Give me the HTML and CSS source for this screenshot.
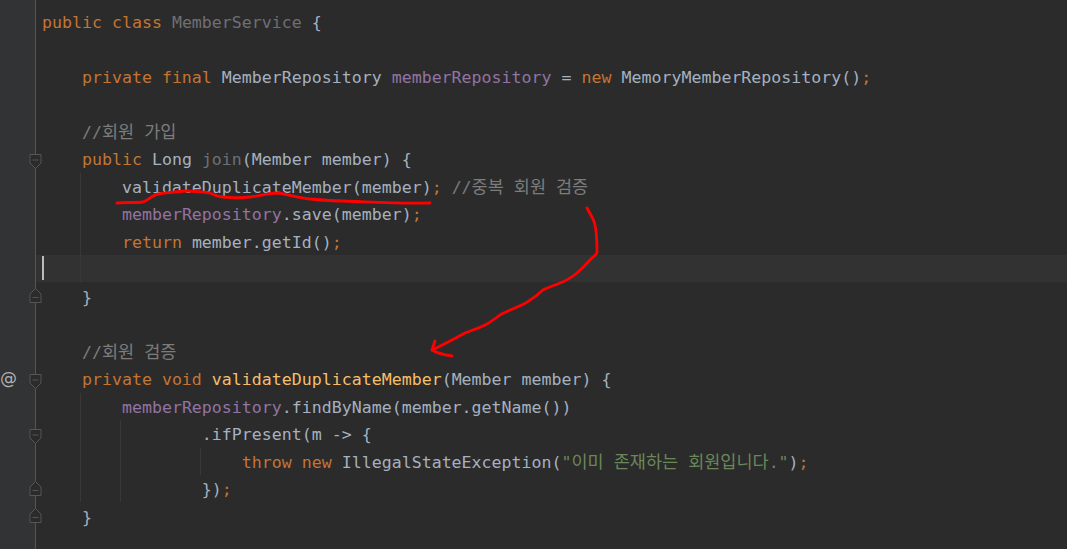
FILE: index.html
```html
<!DOCTYPE html>
<html lang="ko">
<head>
<meta charset="utf-8">
<title>MemberService</title>
<link rel="stylesheet" href="styles.css">
</head>
<body>
<main class="editor">
  <div class="line"><div class="gutter"></div><pre class="code"><span class="kw">public class</span> <span class="un">MemberService</span> {</pre></div>
  <div class="line"><div class="gutter"></div><pre class="code"></pre></div>
  <div class="line"><div class="gutter"></div><pre class="code">    <span class="kw">private final</span> MemberRepository <span class="fd">memberRepository</span> = <span class="kw">new</span> MemoryMemberRepository()<span class="kw">;</span></pre></div>
  <div class="line"><div class="gutter"></div><pre class="code"></pre></div>
  <div class="line"><div class="gutter"></div><pre class="code">    <span class="cm">//<span class="ko">회원</span> <span class="ko">가입</span></span></pre></div>
  <div class="line"><div class="gutter"><svg class="fold open" viewBox="0 0 13 16"><path d="M1 .5H12V9L6.500 14.500 1 9Z"/><path d="M3.500 6H9.500"/></svg></div><pre class="code">    <span class="kw">public</span> Long <span class="un">join</span>(Member member) {</pre></div>
  <div class="line"><div class="gutter"></div><pre class="code">        validateDuplicateMember(member)<span class="kw">;</span> <span class="cm">//<span class="ko">중복</span> <span class="ko">회원</span> <span class="ko">검증</span></span></pre></div>
  <div class="line"><div class="gutter"></div><pre class="code">        <span class="fd">memberRepository</span>.save(member)<span class="kw">;</span></pre></div>
  <div class="line"><div class="gutter"></div><pre class="code">        <span class="kw">return</span> member.getId()<span class="kw">;</span></pre></div>
  <div class="line current"><div class="gutter"></div><pre class="code"><span class="caret"></span></pre></div>
  <div class="line"><div class="gutter"><svg class="fold close" viewBox="0 0 13 16"><path d="M6.500 .5 12 6V14.500H1V6Z"/><path d="M3.500 9.500H9.500"/></svg></div><pre class="code">    }</pre></div>
  <div class="line"><div class="gutter"></div><pre class="code"></pre></div>
  <div class="line"><div class="gutter"></div><pre class="code">    <span class="cm">//<span class="ko">회원</span> <span class="ko">검증</span></span></pre></div>
  <div class="line"><div class="gutter"><span class="at">@</span><svg class="fold open" viewBox="0 0 13 16"><path d="M1 .5H12V9L6.500 14.500 1 9Z"/><path d="M3.500 6H9.500"/></svg></div><pre class="code">    <span class="kw">private void</span> <span class="fn">validateDuplicateMember</span>(Member member) {</pre></div>
  <div class="line"><div class="gutter"></div><pre class="code">        <span class="fd">memberRepository</span>.findByName(member.getName())</pre></div>
  <div class="line"><div class="gutter"><svg class="fold open" viewBox="0 0 13 16"><path d="M1 .5H12V9L6.500 14.500 1 9Z"/><path d="M3.500 6H9.500"/></svg></div><pre class="code">                .ifPresent(m -&gt; {</pre></div>
  <div class="line"><div class="gutter"></div><pre class="code">                    <span class="kw">throw new</span> IllegalStateException(<span class="st">"<span class="ko">이미</span> <span class="ko">존재하는</span> <span class="ko">회원입니다</span>."</span>)<span class="kw">;</span></pre></div>
  <div class="line"><div class="gutter"><svg class="fold close" viewBox="0 0 13 16"><path d="M6.500 .5 12 6V14.500H1V6Z"/><path d="M3.500 9.500H9.500"/></svg></div><pre class="code">                })<span class="kw">;</span></pre></div>
  <div class="line"><div class="gutter"><svg class="fold close" viewBox="0 0 13 16"><path d="M6.500 .5 12 6V14.500H1V6Z"/><path d="M3.500 9.500H9.500"/></svg></div><pre class="code">    }</pre></div>
  <div class="line"><div class="gutter"></div><pre class="code"></pre></div>

  <span class="guide guide-a"></span>
  <span class="guide guide-b"></span>
  <span class="guide guide-c"></span>
  <span class="guide guide-d"></span>

  <svg class="ink" viewBox="0 0 1067 549">
    <path d="M117 203C126 202 136 203 143 202C149 200 152 195 158 194C168 193 178 191 187 191C196 191 203 192 210 193C215 195 218 197 223 197C232 198 241 198 250 197C260 196 268 193 277 193C288 194 298 198 310 199C321 200 332 201 343 201C372 202 401 204 430 203"/>
    <path d="M587 208C590 214 594 219 595 225C597 234 597 243 597 252C597 255 594 256 592 258C587 263 583 268 577 273C572 277 566 281 560 283C554 286 548 287 543 290C539 293 537 296 533 298C528 302 523 305 517 307C511 310 505 312 500 315C496 318 492 321 487 324C480 328 472 330 465 333C454 339 443 345 432 350"/>
    <path d="M435 341L432 350C438 354 445 355 452 356"/>
  </svg>
</main>
</body>
</html>
```
FILE: styles.css
```css
* { box-sizing: border-box; }

html, body {
  margin: 0;
  height: 100%;
  overflow: hidden;
  background: #2b2b2b;
}

.editor {
  position: relative;
  width: 1067px;
  height: 549px;
  padding-top: 7px;
  overflow: hidden;
  background: linear-gradient(to right, #313335 0, #313335 35px, #555 35px, #555 36px, #2b2b2b 36px);
}

.line {
  display: flex;
  height: 27.5px;
}

.gutter {
  position: relative;
  flex: 0 0 36px;
}

.code {
  flex: 1;
  margin: 0;
  padding: 1.500px 0 0 6px;
  font: 16.6px/27.5px "DejaVu Sans Mono", "Noto Sans CJK KR", monospace;
  color: #a4b1c0;
  white-space: pre;
}

.ko {
  font-family: "Noto Sans CJK KR", sans-serif;
  font-size: 17.5px;
  line-height: 0;
}

.current .code { background: #323232; }

.caret {
  display: inline-block;
  width: 2px;
  height: 24px;
  vertical-align: top;
  background: #bbb;
}

.kw { color: #c47532; }
.un { color: #6e6f75; }
.fd { color: #9273a4; }
.fn { color: #f5bf6a; }
.cm { color: #7c7c7c; }
.st { color: #6a8759; }

.at {
  position: absolute;
  left: 0;
  top: 0;
  font: 17px/27px "DejaVu Sans", sans-serif;
  color: #afb1b3;
}

.fold {
  position: absolute;
  left: 29px;
  width: 13px;
  height: 16px;
}
.fold.open { top: 9.500px; }
.fold.close { top: 6px; }
.fold path {
  fill: #2b2b2b;
  stroke: #555;
  stroke-width: 1;
}

.guide {
  position: absolute;
  width: 1px;
  background: #383838;
}
.guide-a { left: 80px; top: 173px; height: 109px; }
.guide-b { left: 80px; top: 393px; height: 109px; }
.guide-c { left: 120px; top: 420px; height: 82px; }
.guide-d { left: 200px; top: 448px; height: 27px; }

.ink {
  position: absolute;
  left: 0;
  top: 0;
  width: 1067px;
  height: 549px;
  pointer-events: none;
}
.ink path {
  fill: none;
  stroke: #f00;
  stroke-width: 2.800;
  stroke-linecap: round;
  stroke-linejoin: round;
}
```
